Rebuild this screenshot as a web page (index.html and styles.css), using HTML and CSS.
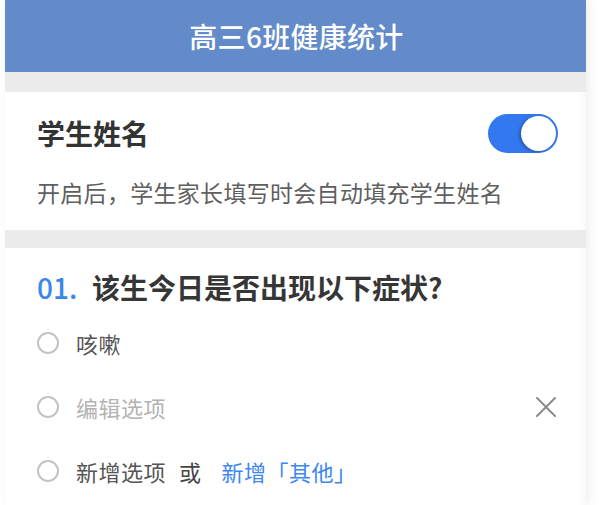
FILE: index.html
```html
<!DOCTYPE html>
<html lang="zh-CN">
<head>
<meta charset="utf-8">
<title>高三6班健康统计</title>
<link rel="stylesheet" href="styles.css">
</head>
<body>
<div class="frame">
  <header class="topbar">高三6班健康统计</header>
  <div class="gap"></div>
  <section class="card name-card">
    <div class="row">
      <h2 class="name-title">学生姓名</h2>
      <div class="switch"><span class="knob"></span></div>
    </div>
    <p class="desc">开启后，学生家长填写时会自动填充学生姓名</p>
  </section>
  <div class="gap gap-small"></div>
  <section class="card question">
    <h3 class="q-title"><span class="q-num">01.</span><span>该生今日是否出现以下症状?</span></h3>
    <ul class="options">
      <li class="option"><span class="radio"></span><span class="opt-text">咳嗽</span></li>
      <li class="option"><span class="radio"></span><span class="opt-text placeholder">编辑选项</span>
        <svg class="close" width="22" height="22" viewBox="0 0 22 22"><path d="M2 2 L20 20 M20 2 L2 20" stroke="#8a8a8a" stroke-width="2" fill="none" stroke-linecap="round"/></svg>
      </li>
      <li class="option"><span class="radio"></span><span class="opt-text">新增选项</span><span class="opt-text or">或</span><span class="opt-text link">新增「其他」</span></li>
    </ul>
  </section>
</div>
</body>
</html>
```
FILE: styles.css
```css
html, body {
  margin: 0;
  padding: 0;
  background: #ffffff;
}
body {
  font-family: "Noto Sans CJK SC", "Noto Sans", sans-serif;
  color: #333333;
  height: 505px;
  overflow: hidden;
}
.frame {
  margin-left: 5px;
  width: 581px;
  height: 505px;
  background: #ffffff;
  box-shadow: 3px 0 10px rgba(0, 0, 0, 0.07), inset -10px 0 10px -10px rgba(0, 0, 0, 0.06);
  display: flex;
  flex-direction: column;
}
.topbar {
  height: 72px;
  background: #638bc9;
  color: #ffffff;
  font-size: 28px;
  font-weight: 500;
  line-height: 72px;
  text-align: center;
  letter-spacing: 0.3px;
  padding-left: 2px;
}
.gap {
  height: 20px;
  background: #ebebeb;
}
.gap-small {
  height: 18px;
}
.card {
  background: transparent;
}
.name-card {
  padding: 21px 28px 22px 32px;
}
.row {
  display: flex;
  align-items: center;
  justify-content: space-between;
  height: 40px;
}
.name-title {
  margin: 0;
  font-size: 28px;
  font-weight: 700;
  line-height: 40px;
  color: #333333;
}
.switch {
  width: 70px;
  height: 39px;
  border-radius: 20px;
  background: #3478ef;
  display: flex;
  align-items: center;
  justify-content: flex-end;
  padding: 0 2px;
  box-sizing: border-box;
}
.knob {
  width: 35px;
  height: 35px;
  border-radius: 50%;
  background: #ffffff;
  box-shadow: -2px 1px 3px rgba(0, 0, 0, 0.25);
}
.desc {
  margin: 23px 0 0;
  font-size: 23px;
  line-height: 32px;
  color: #5f5f5f;
  letter-spacing: 0.3px;
}
.question {
  padding: 19px 29px 0 32px;
}
.q-title {
  margin: 0;
  height: 40px;
  display: flex;
  align-items: center;
  font-size: 28px;
  font-weight: 700;
  line-height: 40px;
  color: #363636;
}
.q-num {
  color: #3a86f0;
  font-weight: 500;
  width: 55px;
}
.options {
  list-style: none;
  margin: 4px 0 0;
  padding: 0;
}
.option {
  height: 64px;
  display: flex;
  align-items: center;
}
.radio {
  width: 22px;
  height: 22px;
  border-radius: 50%;
  border: 2px solid #c4c4c4;
  box-sizing: border-box;
  margin-right: 17px;
  flex: none;
}
.opt-text {
  font-size: 22px;
  line-height: 32px;
  color: #555555;
  letter-spacing: 0.5px;
}
.placeholder {
  color: #b3b3b3;
}
.or {
  margin-left: 13px;
  margin-right: 20px;
  color: #444444;
}
.link {
  color: #3e86f0;
}
.close {
  margin-left: auto;
  margin-right: 0;
}
```
